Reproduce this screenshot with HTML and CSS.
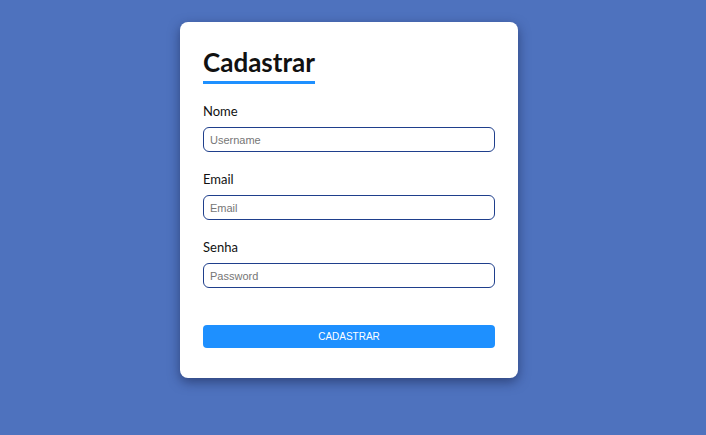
FILE: index.html
```html
<!DOCTYPE html>
<html lang="pt">
<head>
<meta charset="utf-8">
<title>Cadastrar</title>
<link rel="stylesheet" href="styles.css">
</head>
<body>
<main class="card">
  <h1 class="title">Cadastrar</h1>
  <form class="form">
    <div class="field">
      <label class="label" for="nome">Nome</label>
      <input class="input" id="nome" type="text" placeholder="Username">
    </div>
    <div class="field">
      <label class="label" for="email">Email</label>
      <input class="input" id="email" type="email" placeholder="Email">
    </div>
    <div class="field">
      <label class="label" for="senha">Senha</label>
      <input class="input" id="senha" type="password" placeholder="Password">
    </div>
    <button class="button" type="button">CADASTRAR</button>
  </form>
</main>
</body>
</html>
```
FILE: styles.css
```css
html, body {
  margin: 0;
  height: 100%;
}
body {
  background: #4e72be;
  display: flex;
  justify-content: center;
  align-items: flex-start;
  padding: 22px 8px 0 0;
  box-sizing: border-box;
  font-family: Lato, "Open Sans", sans-serif;
}
.card {
  width: 338px;
  box-sizing: border-box;
  background: #fff;
  border-radius: 8px;
  box-shadow: 0 4px 12px rgba(20, 30, 70, 0.55);
  padding: 24px 23px 30px;
}
.title {
  display: inline-block;
  margin: 0;
  font-size: 26px;
  font-weight: 700;
  line-height: 32px;
  color: #111;
  padding-bottom: 3px;
  border-bottom: 3px solid #1e90ff;
}
.form {
  display: flex;
  flex-direction: column;
  margin-top: 18px;
}
.field {
  display: flex;
  flex-direction: column;
  margin-bottom: 18px;
}
.label {
  font-size: 13px;
  line-height: 18px;
  color: #111;
  margin-bottom: 7px;
}
.input {
  height: 25px;
  box-sizing: border-box;
  border: 1px solid #1f3f8c;
  border-radius: 6px;
  padding: 0 6px;
  font-family: "Liberation Sans", Arial, sans-serif;
  font-size: 11px;
  outline: none;
}
.input::placeholder {
  color: #767676;
}
.button {
  margin-top: 19px;
  height: 23px;
  border: none;
  border-radius: 4px;
  background: #1e90ff;
  color: #fff;
  font-family: "Liberation Sans", Arial, sans-serif;
  font-size: 10px;
}
```
